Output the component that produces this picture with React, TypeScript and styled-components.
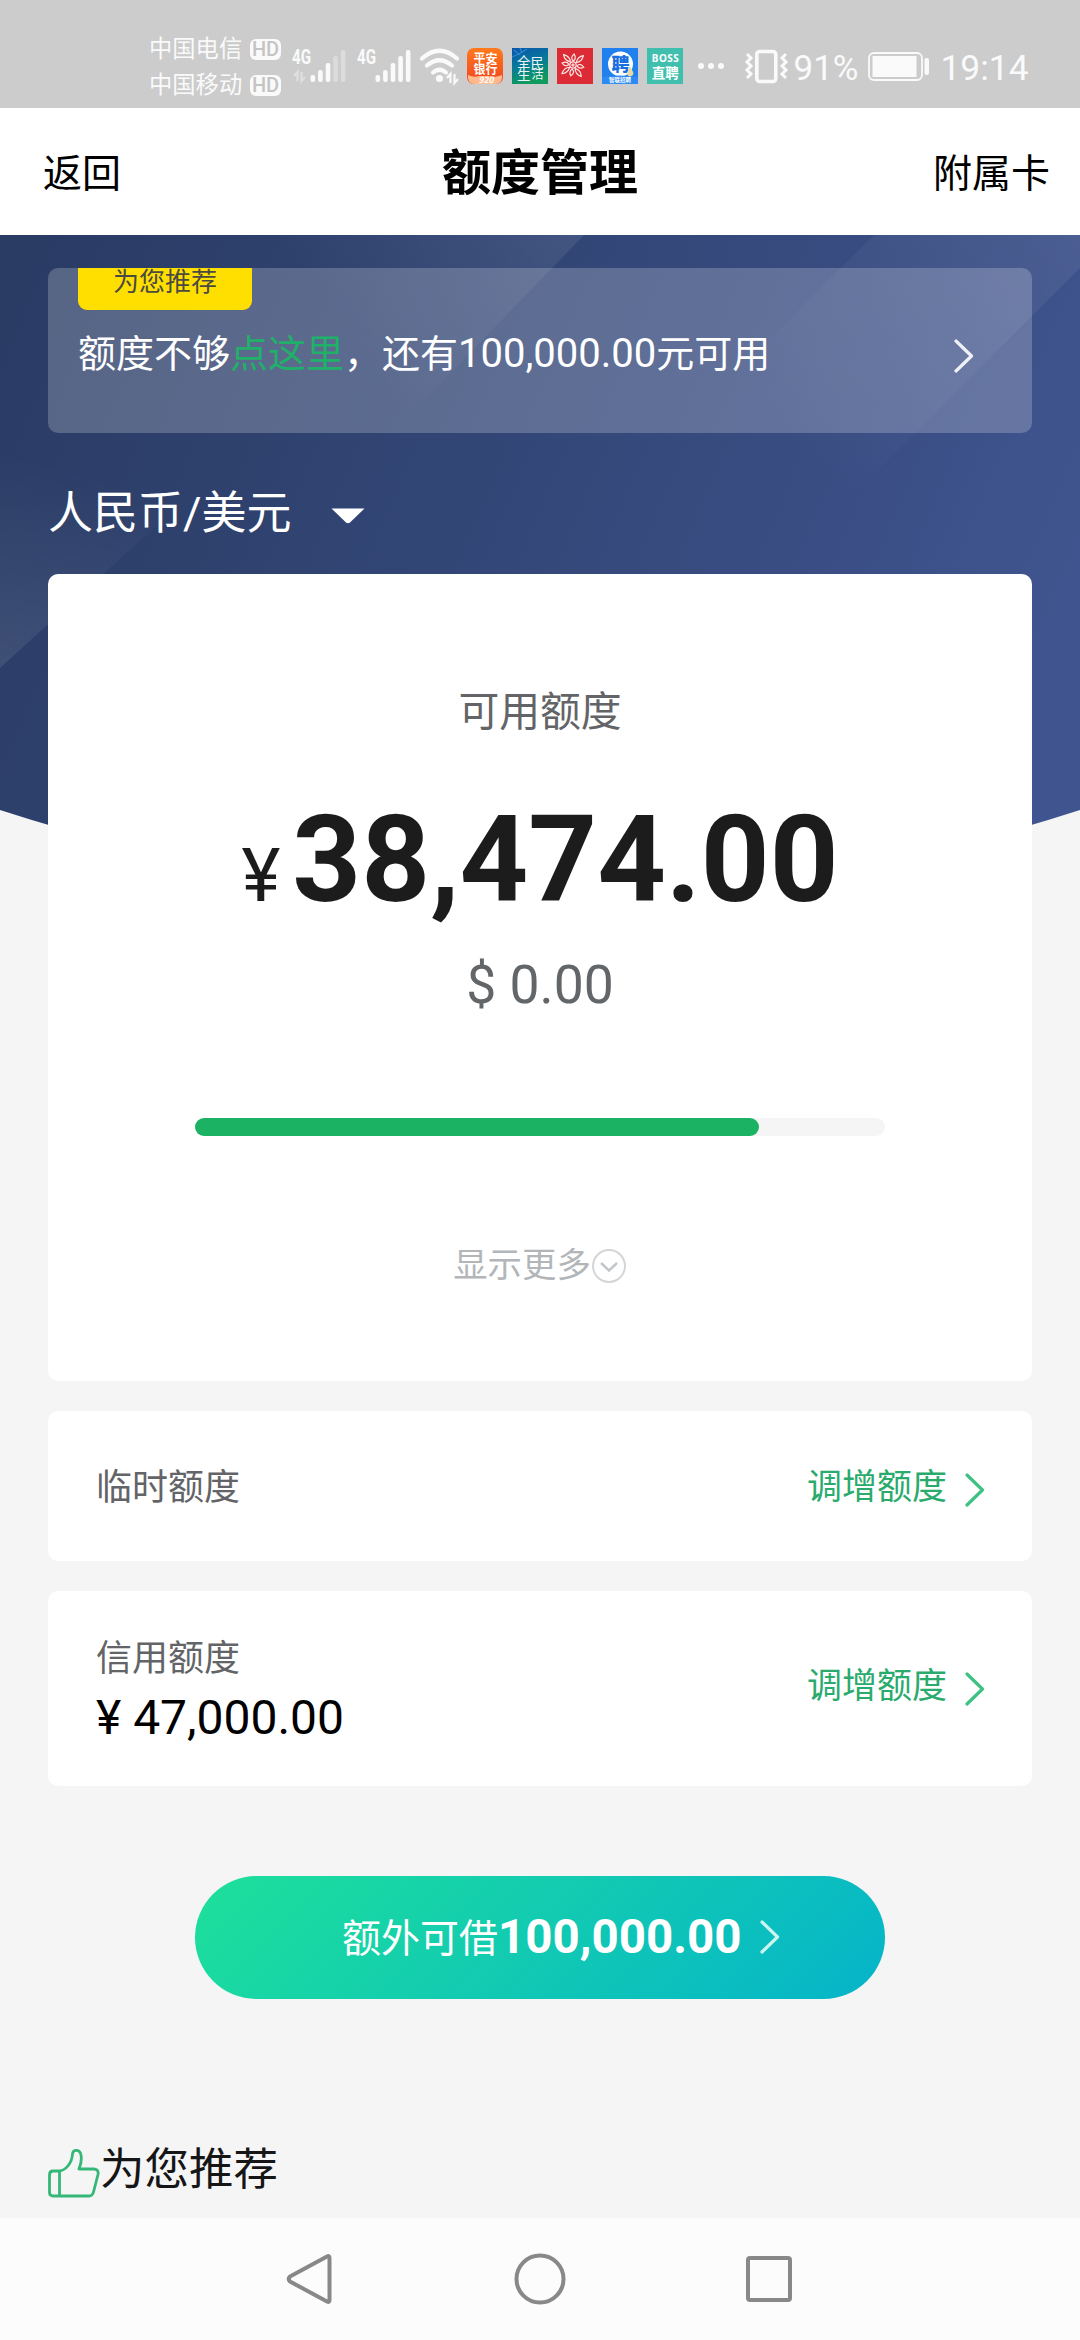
import React from 'react';
import styled, { createGlobalStyle } from 'styled-components';

const GlobalStyle = createGlobalStyle`
  * { box-sizing: border-box; }
  body {
    margin: 0;
    background: #f5f5f5;
    font-family: Roboto, "Noto Sans CJK SC", sans-serif;
    -webkit-font-smoothing: antialiased;
  }
`;

const Screen = styled.div`
  width: 1080px;
  height: 2340px;
  display: flex;
  flex-direction: column;
  overflow: hidden;
  background: #f5f5f5;
`;

/* ---------- status bar ---------- */

const StatusBar = styled.div`
  height: 108px;
  flex: none;
  display: flex;
  padding: 30px 0 0 149px;
  background: #ccc;
  color: #fafafa;
`;

const Carriers = styled.div`
  display: flex;
  flex-direction: column;
  gap: 11px;
  width: 141px;
  padding-top: 7px;
`;

const Carrier = styled.div`
  display: flex;
  align-items: center;
  justify-content: space-between;
  width: 132px;
  height: 25px;
  font-size: 23.3px;
  line-height: 25px;
`;

const HdBadge = styled.span`
  width: 31px;
  height: 21px;
  border-radius: 6px;
  background: #fafafa;
  color: #c4c4c4;
  font-size: 20px;
  font-weight: 500;
  line-height: 21px;
  text-align: center;
`;

const StatusIcon = styled.svg<{ $gap?: number }>`
  flex: none;
  display: block;
  margin-left: ${p => p.$gap ?? 0}px;
  overflow: visible;
`;

const AppBadges = styled.div`
  display: flex;
  gap: 9px;
  margin: 18px 0 0 7px;
`;

const StatusText = styled.div<{ $gap: number; $size: number }>`
  margin-left: ${p => p.$gap}px;
  padding-top: 18px;
  font-size: ${p => p.$size}px;
  line-height: 41px;
  height: 59px;
  white-space: nowrap;
`;

/* ---------- title bar ---------- */

const TitleBar = styled.header`
  height: 127px;
  flex: none;
  display: grid;
  grid-template-columns: 1fr auto 1fr;
  align-items: center;
  padding: 5px 30px 0;
  background: #fff;
  color: #000;
`;

const TitleAction = styled.span<{ $end?: boolean }>`
  padding-left: 13px;
  font-size: 39px;
  line-height: 50px;
  text-align: ${p => (p.$end ? 'right' : 'left')};
`;

const Title = styled.h1`
  margin: 0;
  font-size: 49px;
  font-weight: 700;
  line-height: 60px;
`;

/* ---------- body ---------- */

const Body = styled.main`
  position: relative;
  height: 1983px;
  flex: none;
  display: flex;
  flex-direction: column;
  padding: 33px 48px 0;
`;

const HeroArt = styled.svg`
  position: absolute;
  left: 0;
  top: 0;
`;

const Promo = styled.section`
  position: relative;
  height: 165px;
  flex: none;
  padding: 0 58px 0 30px;
  border-radius: 10px;
  background: rgba(255, 255, 255, 0.21);
  overflow: hidden;
`;

const PromoTag = styled.div`
  width: 174px;
  height: 42px;
  border-radius: 0 0 9px 9px;
  background: #ffdf00;
  color: #4b4a42;
  font-size: 26px;
  line-height: 28px;
  text-align: center;
`;

const PromoRow = styled.div`
  display: flex;
  align-items: center;
  justify-content: space-between;
  height: 60px;
  margin-top: 14px;
  color: #fff;
  font-size: 38px;
  line-height: 60px;
  white-space: nowrap;
`;

const PromoLink = styled.span`
  color: #21b06a;
`;

const PromoFigure = styled.span`
  font-size: 40px;
`;

const Currency = styled.div`
  position: relative;
  display: flex;
  align-items: center;
  gap: 39px;
  height: 60px;
  margin-top: 51px;
  color: #fff;
  font-size: 45px;
  line-height: 60px;
`;

const Caret = styled.svg`
  margin-top: 3px;
`;

const LimitCard = styled.section`
  position: relative;
  display: flex;
  flex-direction: column;
  align-items: center;
  height: 807px;
  flex: none;
  margin-top: 30px;
  border-radius: 10px;
  background: #fff;
`;

const LimitLabel = styled.div`
  margin-top: 108px;
  color: #636467;
  font-size: 40.8px;
  line-height: 60px;
`;

const Amount = styled.div`
  display: flex;
  align-items: baseline;
  gap: 12px;
  margin-top: 48px;
  color: #1c1c1c;
  line-height: 140px;
`;

const YuanSign = styled.span`
  font-size: 74px;
`;

const AmountValue = styled.span`
  font-size: 120px;
  font-weight: 700;
`;

const DollarAmount = styled.div`
  margin-top: 4px;
  color: #636669;
  font-size: 53.5px;
  line-height: 70px;
`;

const Track = styled.div`
  width: 690px;
  height: 18px;
  margin-top: 98px;
  border-radius: 9px;
  background: #f5f5f5;
`;

const Fill = styled.div`
  height: 18px;
  border-radius: 9px;
  background: #1cb264;
`;

const More = styled.div`
  display: flex;
  align-items: center;
  margin-top: 104px;
  color: #b3b6b9;
  font-size: 34.4px;
  line-height: 50px;
`;

const RowCard = styled.section<{ $height: number }>`
  display: flex;
  align-items: center;
  justify-content: space-between;
  height: ${p => p.$height}px;
  flex: none;
  margin-top: 30px;
  padding: 4px 47px 0 48px;
  border-radius: 10px;
  background: #fff;
`;

const RowLabel = styled.div`
  color: #636467;
  font-size: 36px;
  line-height: 50px;
`;

const RowValue = styled.div`
  margin-top: 4px;
  color: #000;
  font-size: 48px;
  line-height: 60px;
`;

const RowAction = styled.div<{ $raise?: number }>`
  display: flex;
  align-items: center;
  gap: 18px;
  padding-bottom: ${p => p.$raise ?? 0}px;
  color: #2aab6d;
  font-size: 35px;
  line-height: 50px;
`;

const BorrowButton = styled.button`
  display: flex;
  align-items: center;
  align-self: center;
  width: 690px;
  height: 123px;
  flex: none;
  margin-top: 90px;
  padding: 0 0 0 147px;
  border: 0;
  border-radius: 62px;
  background: linear-gradient(135deg, #1ee09a 0%, #05b4ca 100%);
  color: #fff;
  font-family: inherit;
  font-size: 39px;
  line-height: 60px;
`;

const BorrowLabel = styled.span`
  padding-top: 2px;
`;

const BorrowAmount = styled.b`
  padding-bottom: 1px;
  font-size: 47.5px;
  font-weight: 700;
`;

const Recommend = styled.div`
  display: flex;
  align-items: center;
  height: 60px;
  margin-top: 141px;
  color: #161616;
  font-size: 44.5px;
  line-height: 60px;
`;

const Thumb = styled.svg`
  margin-top: 8px;
`;

/* ---------- system navigation ---------- */

const NavBar = styled.nav`
  display: flex;
  justify-content: center;
  height: 122px;
  flex: none;
  background: #fcfcfc;
`;

const ChevronSvg = styled.svg<{ $left?: number; $top?: number }>`
  margin-left: ${p => p.$left ?? 0}px;
  margin-top: ${p => p.$top ?? 0}px;
`;

interface ChevronProps {
  color: string;
  left?: number;
  top?: number;
}

const Chevron = ({ color, left, top = 4 }: ChevronProps) => (
  <ChevronSvg $left={left} $top={top} width="20" height="34" viewBox="0 0 20 34">
    <path d="M2 2 L17.500 17 L2 32" fill="none" stroke={color} strokeWidth="3.200" strokeLinecap="round" strokeLinejoin="round" />
  </ChevronSvg>
);

interface SignalProps {
  weak?: boolean;
}

const Signal = ({ weak }: SignalProps) => (
  <g>
    <text x="0" y="17" fontSize="20.500" fontWeight="700" textLength="19" lengthAdjust="spacingAndGlyphs" fill="#fafafa">4G</text>
    {[0, 1, 2, 3, 4].map(i => {
      const h = [7, 12, 19, 26, 32][i];
      return (
        <rect key={i} x={18.5 + i * 7.6} y={35 - h} width="4.600" height={h} rx="2" fill={weak && i > 2 ? '#dcdcdc' : '#fafafa'} />
      );
    })}
    {weak && (
      <path d="M2 29 L5.500 25 V34 M9.500 25 V34 L13 30" fill="none" stroke="#dedede" strokeWidth="2.400" />
    )}
  </g>
);

const cjk = '"Noto Sans CJK SC", sans-serif';

const App = () => {
  const usedPercent = 81.8;
  return (
    <Screen>
      <GlobalStyle />
      <StatusBar>
        <Carriers>
          <Carrier>中国电信<HdBadge>HD</HdBadge></Carrier>
          <Carrier>中国移动<HdBadge>HD</HdBadge></Carrier>
        </Carriers>
        <StatusIcon width="170" height="60" viewBox="0 -17 170 60">
          <g transform="translate(2 0)"><Signal weak /></g>
          <g transform="translate(67 0)"><Signal /></g>
          <g fill="none" stroke="#fafafa" strokeWidth="4.200" strokeLinecap="round">
            <path d="M132 11.500 Q149.500 -4 167 11.500" />
            <path d="M137 18.500 Q149.500 8 162 18.500" />
            <path d="M143 25.500 Q149.500 20 156 25.500" />
          </g>
          <circle cx="149.500" cy="31.500" r="3.600" fill="#fafafa" />
          <path d="M157 31 L160.500 27 V36 M164.500 27 V36 L168 32" fill="none" stroke="#fafafa" strokeWidth="2.200" />
        </StatusIcon>
        <AppBadges>
          <StatusIcon width="36" height="36" viewBox="0 0 36 36">
            <defs>
              <linearGradient id="pingan" x1="0" y1="0" x2="0" y2="1">
                <stop offset="0" stopColor="#ff7a1c" />
                <stop offset="1" stopColor="#f0431f" />
              </linearGradient>
            </defs>
            <rect width="36" height="36" rx="7" fill="url(#pingan)" />
            <path d="M1 27 Q7 30 12 28 H24 Q29 30 35 27 V30 Q34 36 28 36 H8 Q2 36 1 30Z" fill="#ffb98c" />
            <g fill="#fff" fontFamily={cjk} fontWeight="700" textAnchor="middle">
              <text x="18.500" y="15" fontSize="12">平安</text>
              <text x="18.500" y="26" fontSize="12">银行</text>
              <text x="19" y="34.500" fontSize="8.500" fontStyle="italic">920</text>
            </g>
          </StatusIcon>
          <StatusIcon width="36" height="36" viewBox="0 0 36 36">
            <defs>
              <linearGradient id="life" x1="0" y1="0" x2="0.300" y2="1">
                <stop offset="0" stopColor="#0a55ab" />
                <stop offset="0.500" stopColor="#07789a" />
                <stop offset="1" stopColor="#0f9a5e" />
              </linearGradient>
            </defs>
            <rect width="36" height="36" fill="url(#life)" />
            <path d="M0 9 Q8 6 15 1 M2 2 L8 7 M8 0 L10 5" stroke="#2d86cf" strokeWidth="1.300" fill="none" />
            <g fill="#e9f5f6" fontFamily={cjk}>
              <text x="5" y="19" fontSize="13.500">全</text>
              <text x="18.500" y="20" fontSize="13.500">民</text>
              <text x="5" y="31.500" fontSize="13.500">生</text>
              <text x="19.500" y="31" fontSize="12">活</text>
            </g>
          </StatusIcon>
          <StatusIcon width="36" height="36" viewBox="0 0 36 36">
            <rect width="36" height="36" fill="#dc2b34" />
            <g transform="translate(16 17)" fill="none" stroke="#fbe4e2" strokeWidth="1.200">
              <circle r="3.200" />
              <circle r="1" />
              {[12, 58, 102, 146, 190, 232, 276, 322].map((a, i) => (
                <path key={a} transform={`rotate(${a})`} d={i % 2 ? 'M4 0 Q9 -4 14 -1 Q9 3 4 0' : 'M4 0 Q7 -4 11 0 Q7 3 4 0'} />
              ))}
            </g>
          </StatusIcon>
          <StatusIcon width="36" height="36" viewBox="0 0 36 36">
            <rect width="36" height="36" fill="#1f80ee" />
            <circle cx="18.500" cy="16" r="12.500" fill="#fff" />
            <text x="18.500" y="22.500" fontSize="18" fontWeight="900" fill="#1a6fe0" textAnchor="middle" fontFamily={cjk}>聘</text>
            <path d="M0 29 Q18 26 36 29 V36 H0Z" fill="#2d8af2" />
            <path d="M27 19 Q29 18 30 22 Q33 26 29.500 28 Q26 29 25 26Z" fill="#e9d9a5" />
            <text x="18" y="34" fontSize="5.500" fontWeight="700" fill="#fff" textAnchor="middle" fontFamily={cjk}>智联招聘</text>
          </StatusIcon>
          <StatusIcon width="36" height="36" viewBox="0 0 36 36">
            <rect width="36" height="36" fill="#40bfae" />
            <g fill="#fff" textAnchor="middle" fontWeight="700">
              <text x="18.300" y="14" fontSize="10" textLength="27" lengthAdjust="spacing" fontFamily='"Noto Sans", sans-serif'>BOSS</text>
              <text x="18.300" y="29.500" fontSize="13.500" fontFamily={cjk}>直聘</text>
            </g>
          </StatusIcon>
        </AppBadges>
        <StatusIcon $gap={15} width="68" height="60" viewBox="0 0 68 60">
          <g fill="#fafafa">
            <circle cx="3" cy="36" r="3" />
            <circle cx="13" cy="36" r="3" />
            <circle cx="23" cy="36" r="3" />
          </g>
          <g fill="none" stroke="#fafafa">
            <rect x="58.800" y="21.500" width="19" height="30" rx="3" strokeWidth="3.600" />
            <path strokeWidth="3" d="M49 24 L53 28 L49 32 L53 36 L49 40 L53 44 L49 48 M88 24 L84 28 L88 32 L84 36 L88 40 L84 44 L88 48" />
          </g>
        </StatusIcon>
        <StatusText $gap={27.5} $size={35}>91%</StatusText>
        <StatusIcon $gap={10} width="62" height="60" viewBox="0 0 62 60">
          <rect x="1" y="23" width="53" height="27" rx="5" fill="none" stroke="#fafafa" strokeWidth="1.800" />
          <rect x="4.500" y="26" width="44" height="21" fill="#fafafa" />
          <rect x="56.500" y="28" width="4.500" height="17" rx="2" fill="#fafafa" />
        </StatusIcon>
        <StatusText $gap={10} $size={35.4}>19:14</StatusText>
      </StatusBar>

      <TitleBar>
        <TitleAction>返回</TitleAction>
        <Title>额度管理</Title>
        <TitleAction $end>附属卡</TitleAction>
      </TitleBar>

      <Body>
        <HeroArt width="1080" height="640" viewBox="0 0 1080 640">
          <defs>
            <linearGradient id="hero" gradientUnits="userSpaceOnUse" x1="0" y1="100" x2="1000" y2="520">
              <stop offset="0" stopColor="#2a3c64" />
              <stop offset="0.500" stopColor="#334778" />
              <stop offset="1" stopColor="#40548f" />
            </linearGradient>
            <linearGradient id="rayTop" gradientUnits="userSpaceOnUse" x1="584" y1="0" x2="380" y2="150">
              <stop offset="0" stopColor="#fff" stopOpacity="0.080" />
              <stop offset="1" stopColor="#fff" stopOpacity="0" />
            </linearGradient>
            <linearGradient id="rayLeft" gradientUnits="userSpaceOnUse" x1="0" y1="433" x2="60" y2="230">
              <stop offset="0" stopColor="#fff" stopOpacity="0.090" />
              <stop offset="1" stopColor="#fff" stopOpacity="0" />
            </linearGradient>
            <linearGradient id="rayRight" gradientUnits="userSpaceOnUse" x1="1060" y1="0" x2="820" y2="240">
              <stop offset="0" stopColor="#fff" stopOpacity="0.070" />
              <stop offset="1" stopColor="#fff" stopOpacity="0" />
            </linearGradient>
            <clipPath id="bowl">
              <path d="M0 0 H1080 V575 Q540 750 0 575 Z" />
            </clipPath>
          </defs>
          <g clipPath="url(#bowl)">
            <rect width="1080" height="700" fill="url(#hero)" />
            <path d="M200 0 H584 L284 310Z" fill="url(#rayTop)" />
            <path d="M0 433 L147 299 L300 160 H0Z" fill="url(#rayLeft)" />
            <path d="M874 0 H1080 V33 L780 333 H540Z" fill="url(#rayRight)" />
          </g>
        </HeroArt>

        <Promo>
          <PromoTag>为您推荐</PromoTag>
          <PromoRow>
            <span>额度不够<PromoLink>点这里</PromoLink>，还有<PromoFigure>100,000.00</PromoFigure>元可用</span>
            <Chevron color="#eef0f6" />
          </PromoRow>
        </Promo>

        <Currency>
          人民币/美元
          <Caret width="34" height="16" viewBox="0 0 34 16">
            <path d="M0.500 0.500 H33.500 L19 14.500 Q17 16 15 14.500Z" fill="#fff" />
          </Caret>
        </Currency>

        <LimitCard>
          <LimitLabel>可用额度</LimitLabel>
          <Amount>
            <YuanSign>¥</YuanSign>
            <AmountValue>38,474.00</AmountValue>
          </Amount>
          <DollarAmount>$ 0.00</DollarAmount>
          <Track>
            <Fill style={{ width: `${usedPercent}%` }} />
          </Track>
          <More>
            显示更多
            <svg width="36" height="36" viewBox="0 0 36 36" fill="none">
              <circle cx="18" cy="19" r="16" stroke="#d3d5d7" strokeWidth="2" />
              <path d="M10 16 L18 23.500 L26 16" stroke="#c3c6c9" strokeWidth="2.400" />
            </svg>
          </More>
        </LimitCard>

        <RowCard $height={150}>
          <RowLabel>临时额度</RowLabel>
          <RowAction>调增额度<Chevron color="#3fc183" /></RowAction>
        </RowCard>

        <RowCard $height={195}>
          <div>
            <RowLabel>信用额度</RowLabel>
            <RowValue>¥ 47,000.00</RowValue>
          </div>
          <RowAction $raise={7}>调增额度<Chevron color="#3fc183" top={3} /></RowAction>
        </RowCard>

        <BorrowButton>
          <BorrowLabel>额外可借</BorrowLabel>
          <BorrowAmount>100,000.00</BorrowAmount>
          <Chevron color="#c9f5f0" left={18} top={-1} />
        </BorrowButton>

        <Recommend>
          <Thumb width="52" height="50" viewBox="0 0 52 50" fill="none" stroke="#35b877" strokeWidth="2.800" strokeLinejoin="round">
            <path d="M11.500 22 C18 21 24 14 24.500 5 C25 0 32 0 33 6 C34 11 33 15 31 20 H46 Q51 20.500 50 25.500 L45.500 43 Q44.500 47 41 47 H5 Q1.500 47 1.500 43.500 V26 Q1.500 22 5 22Z" />
            <path d="M11.500 22 V47" />
          </Thumb>
          为您推荐
        </Recommend>
      </Body>

      <NavBar>
        <svg width="1080" height="122" viewBox="0 0 1080 122" fill="none" stroke="#888" strokeWidth="4" strokeLinejoin="round">
          <path d="M327 38.500 Q329.500 37 329.500 40 V82 Q329.500 85 327 83.500 L290 63.500 Q287.500 61 290 58.500Z" />
          <circle cx="540" cy="61" r="23.500" />
          <rect x="748" y="40" width="42" height="42" rx="2" />
        </svg>
      </NavBar>
    </Screen>
  );
};

export default App;
